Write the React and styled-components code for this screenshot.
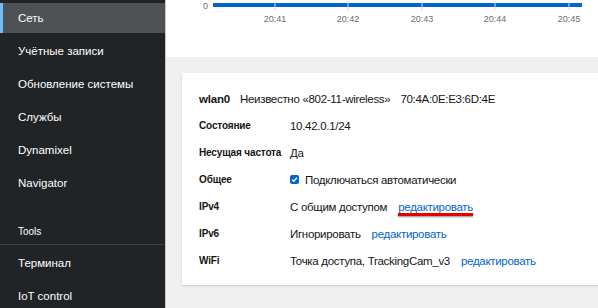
import React from "react";
import styled, { createGlobalStyle } from "styled-components";

const FONT = `"Liberation Sans", Arial, sans-serif`;

const Global = createGlobalStyle`
  html, body { margin: 0; padding: 0; }
  body { font-family: ${FONT}; color: #151515; background: #f0f0f0; }
  #root { width: 598px; height: 308px; overflow: hidden; }
`;

const Page = styled.div`
  display: flex;
  width: 598px;
  height: 308px;
  overflow: hidden;
`;

const Sidebar = styled.nav`
  width: 165px;
  flex: 0 0 165px;
  background: #212427;
  border-right: 1px solid #c8c8c8;
  display: flex;
  flex-direction: column;
  gap: 3px;
  padding-top: 3px;
  box-sizing: content-box;
`;

const NavItem = styled.div`
  height: 30px;
  flex: 0 0 30px;
  display: flex;
  align-items: center;
  padding-left: 18px;
  font-size: 11.5px;
  color: #fff;
  white-space: nowrap;
  background: ${(p) => (p.$active ? "#4f5255" : "transparent")};
  box-shadow: ${(p) => (p.$active ? "inset 3px 0 0 #73bcf7" : "none")};
`;

const SectionTitle = styled.div`
  margin-top: 17px;
  height: 26px;
  flex: 0 0 26px;
  display: flex;
  align-items: center;
  padding-left: 18px;
  font-size: 10px;
  color: #fff;
  border-bottom: 1px solid #3c3f42;
`;

const Main = styled.main`
  flex: 1;
  display: flex;
  flex-direction: column;
  background: #f0f0f0;
  overflow: hidden;
`;

const ChartArea = styled.div`
  height: 57px;
  flex: 0 0 57px;
  background: #fff;
`;

const Content = styled.div`
  padding: 16px 0 0 16px;
`;

const Card = styled.section`
  background: #fff;
  margin-right: -30px;
  padding: 12px 17px 11px;
  box-shadow: 0 1px 2px rgba(0, 0, 0, 0.16);
`;

const HeaderRow = styled.div`
  height: 27px;
  display: flex;
  align-items: center;
  gap: 10px;
  font-size: 11.5px;
  letter-spacing: -0.3px;
  white-space: nowrap;
`;

const IfaceName = styled.span`
  font-weight: 700;
  letter-spacing: -0.2px;
`;

const Grid = styled.div`
  display: grid;
  grid-template-columns: 91px auto;
  grid-auto-rows: 27px;
  align-items: center;
`;

const Label = styled.div`
  font-size: 10px;
  font-weight: 700;
  letter-spacing: -0.15px;
  white-space: nowrap;
`;

const Value = styled.div`
  font-size: 11.5px;
  letter-spacing: -0.3px;
  display: flex;
  align-items: center;
  gap: 11px;
  white-space: nowrap;
`;

const Link = styled.a`
  color: #0066cc;
  text-decoration: none;
  position: relative;
  ${(p) =>
    p.$marked &&
    `
    &::after {
      content: "";
      position: absolute;
      left: 0;
      right: 0;
      bottom: -3px;
      height: 3px;
      background: #e60000;
      box-shadow: 0 1px 2px rgba(0,0,0,0.45);
    }
  `}
`;

const Check = styled.span`
  width: 9px;
  height: 9px;
  border-radius: 2px;
  background: #0066cc;
  display: inline-flex;
  align-items: center;
  justify-content: center;
  margin-right: -5px;
`;

function Chart() {
  const ticks = [
    { x: 109, t: "20:41" },
    { x: 182, t: "20:42" },
    { x: 256, t: "20:43" },
    { x: 329, t: "20:44" },
    { x: 403, t: "20:45" },
  ];
  return (
    <svg width="432" height="57" viewBox="0 0 432 57">
      <text x="42" y="9" fontSize="9" fill="#6a6e73" textAnchor="end" fontFamily={FONT}>0</text>
      <rect x="47" y="3" width="369" height="4" fill="#0066cc" />
      {ticks.map((k) => (
        <g key={k.t}>
          <line x1={k.x} x2={k.x} y1="3" y2="10" stroke="#d2d2d2" strokeWidth="1" />
          <text x={k.x} y="22" fontSize="9" fill="#6a6e73" textAnchor="middle" fontFamily={FONT}>
            {k.t}
          </text>
        </g>
      ))}
    </svg>
  );
}

export default function App() {
  return (
    <>
      <Global />
      <Page>
        <Sidebar>
          <NavItem $active>Сеть</NavItem>
          <NavItem>Учётные записи</NavItem>
          <NavItem>Обновление системы</NavItem>
          <NavItem>Службы</NavItem>
          <NavItem>Dynamixel</NavItem>
          <NavItem>Navigator</NavItem>
          <SectionTitle>Tools</SectionTitle>
          <NavItem>Терминал</NavItem>
          <NavItem>IoT control</NavItem>
        </Sidebar>
        <Main>
          <ChartArea>
            <Chart />
          </ChartArea>
          <Content>
            <Card>
              <HeaderRow>
                <IfaceName>wlan0</IfaceName>
                <span>Неизвестно «802-11-wireless»</span>
                <span>70:4A:0E:E3:6D:4E</span>
              </HeaderRow>
              <Grid>
                <Label>Состояние</Label>
                <Value>10.42.0.1/24</Value>
                <Label>Несущая частота</Label>
                <Value>Да</Value>
                <Label>Общее</Label>
                <Value>
                  <Check>
                    <svg width="7" height="7" viewBox="0 0 8 8">
                      <path d="M1.3 4.2 L3.2 6 L6.8 2" fill="none" stroke="#fff" strokeWidth="1.6" />
                    </svg>
                  </Check>
                  <span>Подключаться автоматически</span>
                </Value>
                <Label>IPv4</Label>
                <Value>
                  <span>С общим доступом</span>
                  <Link $marked>редактировать</Link>
                </Value>
                <Label>IPv6</Label>
                <Value>
                  <span>Игнорировать</span>
                  <Link>редактировать</Link>
                </Value>
                <Label>WiFi</Label>
                <Value>
                  <span>Точка доступа, TrackingCam_v3</span>
                  <Link>редактировать</Link>
                </Value>
              </Grid>
            </Card>
          </Content>
        </Main>
      </Page>
    </>
  );
}
